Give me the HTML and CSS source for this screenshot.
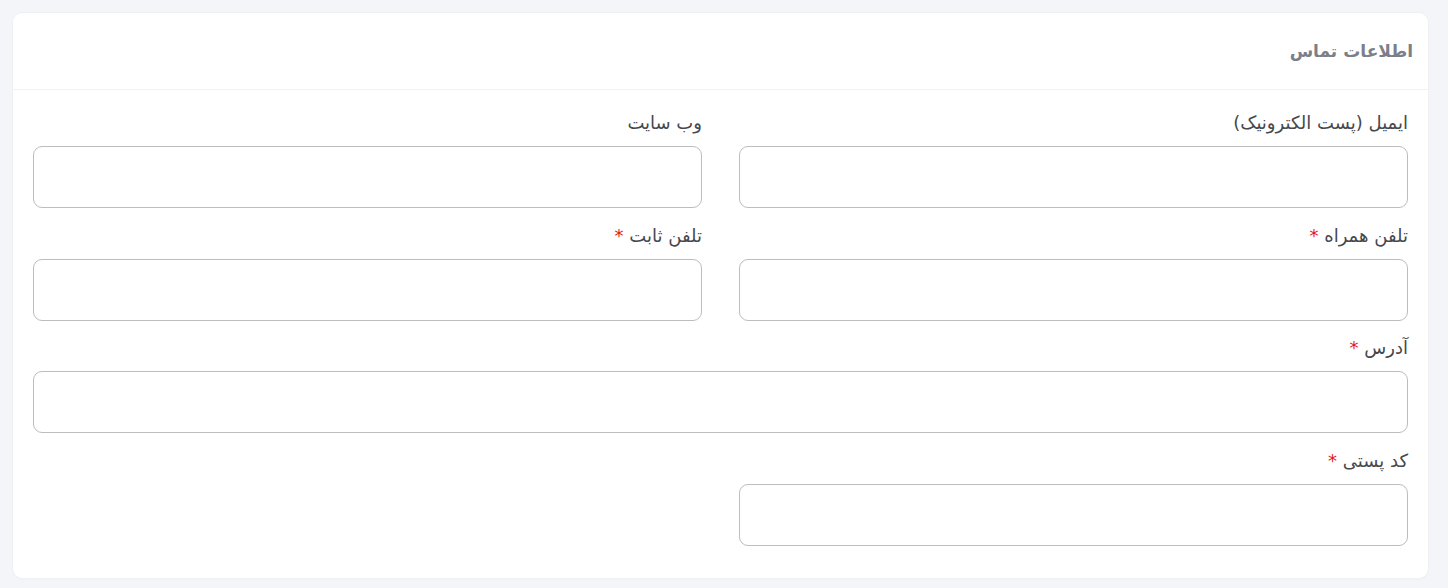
FILE: index.html
```html
<!DOCTYPE html>
<html lang="fa" dir="rtl">
<head>
<meta charset="utf-8">
<title>اطلاعات تماس</title>
<link rel="stylesheet" href="styles.css">
</head>
<body>
<div class="page">
  <section class="card">
    <header class="card-header">
      <h2 class="card-title">اطلاعات تماس</h2>
    </header>
    <div class="card-body">
      <div class="form-grid">
        <div class="field">
          <label class="label">ایمیل (پست الکترونیک)</label>
          <input class="input" type="text">
        </div>
        <div class="field">
          <label class="label">وب سایت</label>
          <input class="input" type="text">
        </div>
        <div class="field">
          <label class="label">تلفن همراه <span class="req">*</span></label>
          <input class="input" type="text">
        </div>
        <div class="field">
          <label class="label">تلفن ثابت <span class="req">*</span></label>
          <input class="input" type="text">
        </div>
        <div class="field span-2">
          <label class="label">آدرس <span class="req">*</span></label>
          <input class="input" type="text">
        </div>
        <div class="field">
          <label class="label">کد پستی <span class="req">*</span></label>
          <input class="input" type="text">
        </div>
      </div>
    </div>
  </section>
</div>
</body>
</html>
```
FILE: styles.css
```css
* { box-sizing: border-box; }
html, body {
  margin: 0;
  padding: 0;
  background: #f3f5f8;
  font-family: "DejaVu Sans", "Noto Sans", sans-serif;
}
.page {
  padding: 13px 20px 10px 13px;
}
.card {
  background: #ffffff;
  border-radius: 9px;
  box-shadow: 0 0 0 1px #eef0f3, 0 1px 3px rgba(0,0,0,0.03);
}
.card-header {
  height: 77px;
  display: flex;
  align-items: center;
  padding: 0 15px;
  border-bottom: 1px solid #f1f2f4;
}
.card-title {
  margin: 0;
  font-size: 17px;
  font-weight: 700;
  color: #7b7f8a;
}
.card-body {
  padding: 22px 20px 32px 20px;
}
.form-grid {
  display: grid;
  grid-template-columns: 1fr 1fr;
  column-gap: 37px;
  row-gap: 16.5px;
}
.span-2 { grid-column: span 2; }
.field {
  display: flex;
  flex-direction: column;
}
.label {
  font-size: 18px;
  line-height: 22px;
  color: #46484e;
  margin-bottom: 12px;
}
.req { color: #e01b1b; }
.input {
  height: 62px;
  border: 1px solid #bdbdbd;
  border-radius: 9px;
  background: #fff;
  font: inherit;
  outline: none;
}
```
